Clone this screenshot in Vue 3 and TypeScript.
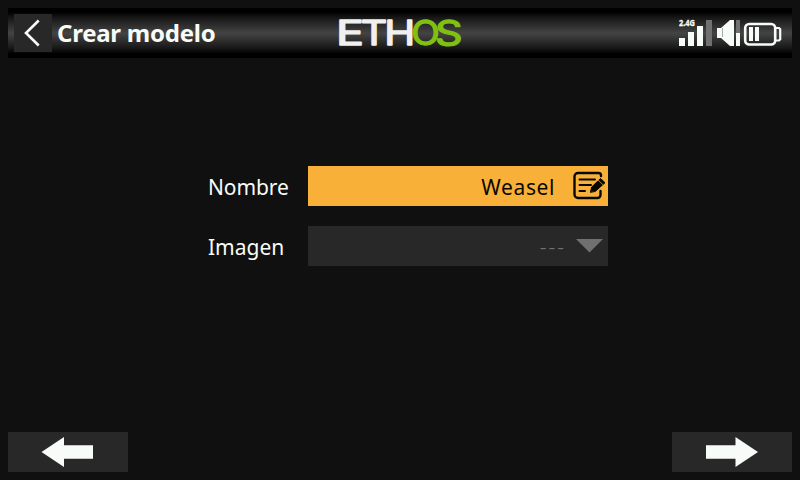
<script setup lang="ts">
import { ref } from 'vue'

const title = ref<string>('Crear modelo')
const modelName = ref<string>('Weasel')
const image = ref<string>('---')
</script>

<template>
  <main class="screen">
    <header class="topbar">
      <div class="left">
        <button class="back" aria-label="Atrás">
          <svg width="38" height="38" viewBox="0 0 38 38"><path d="M24.7 6.5 12 19l12.7 12.5" fill="none" stroke="#f8fcf8" stroke-width="2.6" /></svg>
        </button>
        <h1 class="title">{{ title }}</h1>
      </div>
      <svg class="logo" width="132" height="40" viewBox="-4 -5 132 40">
        <text class="mark" y="27.300"><tspan class="white" x="-2" textLength="28" lengthAdjust="spacingAndGlyphs">E</tspan><tspan class="white" x="22.800" textLength="26.500" lengthAdjust="spacingAndGlyphs">T</tspan><tspan class="white" x="46.300" textLength="31" lengthAdjust="spacingAndGlyphs">H</tspan><tspan class="green" x="73.300" textLength="28.500" lengthAdjust="spacingAndGlyphs">O</tspan><tspan class="green" x="97" textLength="27.500" lengthAdjust="spacingAndGlyphs">S</tspan></text>
      </svg>
      <svg class="status" width="106" height="32" viewBox="678 17 106 32">
        <text class="band" x="679" y="26" textLength="16" lengthAdjust="spacingAndGlyphs">2.4G</text>
        <g fill="#f8fcf8">
          <rect x="679" y="38" width="6" height="8" />
          <rect x="688" y="32" width="6" height="14" />
          <rect x="697" y="26" width="6" height="20" />
          <rect x="706" y="20" width="6" height="26" fill="#707070" />
          <path d="M717 28h4l9-8h4v26h-4l-9-8h-4z" />
          <path d="M722.500 28v9" stroke="#a8aca8" />
          <rect x="736" y="20" width="4" height="13" fill="#707070" />
          <rect x="736" y="33" width="4" height="13" />
          <rect x="749" y="27" width="4" height="14" />
          <rect x="755" y="27" width="4" height="14" />
        </g>
        <rect x="745.200" y="24" width="30" height="20.500" rx="4" fill="none" stroke="#f8fcf8" stroke-width="2.6" />
        <path d="M776 28h3l1.200 1.200v10L779 40.500h-3" fill="none" stroke="#f8fcf8" stroke-width="2.2" />
      </svg>
    </header>

    <section class="form">
      <div class="row">
        <span class="label">Nombre</span>
        <div class="field active">
          <span class="value">{{ modelName }}</span>
          <svg width="34" height="34" viewBox="571 169 34 34" overflow="visible" fill="none" stroke="#080800" stroke-width="2.4" stroke-linecap="round">
            <path d="M601 176v-.500a2.500 2.500 0 0 0-2.500-2.500H578a3.500 3.500 0 0 0-3.500 3.500v18a3.500 3.500 0 0 0 3.500 3.500h19.500a3 3 0 0 0 3-3v-4" />
            <path d="M579.500 179.500H595M579.500 185H591M579.500 191h5.500" stroke-width="2" />
            <path d="m590.500 192 1.200-5L600.500 178.500l4.500 4.200-9.500 8.500z" fill="#080800" stroke-width="1" stroke-linejoin="round" />
            <path d="m598 180 4.700 4.500" stroke="#f8b038" stroke-width="0.7" />
          </svg>
        </div>
      </div>
      <div class="row">
        <span class="label image-label">Imagen</span>
        <div class="field">
          <span class="value muted">{{ image }}</span>
          <svg class="caret" width="27" height="14" viewBox="0 0 27 14"><path d="M0 0h27L13.500 13.500z" fill="#707070" /></svg>
        </div>
      </div>
    </section>

    <footer class="nav">
      <button class="step" aria-label="Anterior">
        <svg width="54" height="32" viewBox="0 0 54 32"><path d="M0.500 16 23 1v8.300h29v13.400H23V31z" fill="#f8fcf8" /></svg>
      </button>
      <button class="step" aria-label="Siguiente">
        <svg width="54" height="32" viewBox="0 0 54 32"><path d="M53 16 30.500 1v8.300H1v13.400h29.500V31z" fill="#f8fcf8" /></svg>
      </button>
    </footer>
  </main>
</template>

<style>
body {
  margin: 0;
  background: #101010;
}
</style>

<style scoped>
.screen {
  box-sizing: border-box;
  width: 800px;
  height: 480px;
  padding: 8px;
  display: flex;
  flex-direction: column;
  background: #101010;
  color: #f8fcf8;
  font-family: "Noto Sans", sans-serif;
}
.topbar {
  box-sizing: border-box;
  height: 50px;
  padding: 0 8px 0 6px;
  display: grid;
  grid-template-columns: 320px 1fr 106px;
  align-items: center;
  background: linear-gradient(#000 0, #000 8%, #181818 20%, #424242 49%, #424242 52%, #181818 80%, #000 92%, #000 100%);
}
.left {
  display: flex;
  align-items: center;
  gap: 5px;
}
button {
  border: 0;
  padding: 0;
  background: #282828;
}
.back {
  width: 38px;
  height: 38px;
}
svg {
  display: block;
}
.title {
  margin: 0;
  font-size: 24px;
  line-height: 38px;
  font-weight: 700;
  letter-spacing: -0.250px;
  white-space: nowrap;
}
.mark {
  font: 400 33.500px Inter, sans-serif;
  stroke-width: 1.300px;
  stroke-linejoin: round;
}
.white {
  fill: #f0f0f0;
  stroke: #f0f0f0;
}
.green {
  fill: #80c010;
  stroke: #80c010;
}
.band {
  font: 700 8px "Noto Sans", sans-serif;
  fill: #f8fcf8;
  stroke: #f8fcf8;
  stroke-width: 0.300px;
}
.form {
  flex: 1;
  padding: 108px 0 0 200px;
  display: flex;
  flex-direction: column;
  gap: 20px;
}
.row {
  display: flex;
  height: 40px;
}
.label {
  width: 100px;
  font-size: 21px;
  line-height: 42px;
  letter-spacing: -0.100px;
}
.image-label {
  letter-spacing: 0;
}
.field {
  box-sizing: border-box;
  width: 300px;
  height: 40px;
  padding-right: 3px;
  display: flex;
  justify-content: flex-end;
  align-items: center;
  background: #282828;
}
.active {
  background: #f8b038;
  color: #080800;
}
.value {
  margin-right: 16px;
  padding-top: 2px;
  font-size: 21px;
  line-height: 40px;
  letter-spacing: 0.600px;
}
.muted {
  margin-right: 10px;
  font-weight: 300;
  letter-spacing: 2px;
  color: #707070;
}
.field .caret {
  margin-right: 2px;
}
.nav {
  display: flex;
  justify-content: space-between;
}
.step {
  width: 120px;
  height: 40px;
  display: flex;
  align-items: center;
  justify-content: center;
}
</style>
